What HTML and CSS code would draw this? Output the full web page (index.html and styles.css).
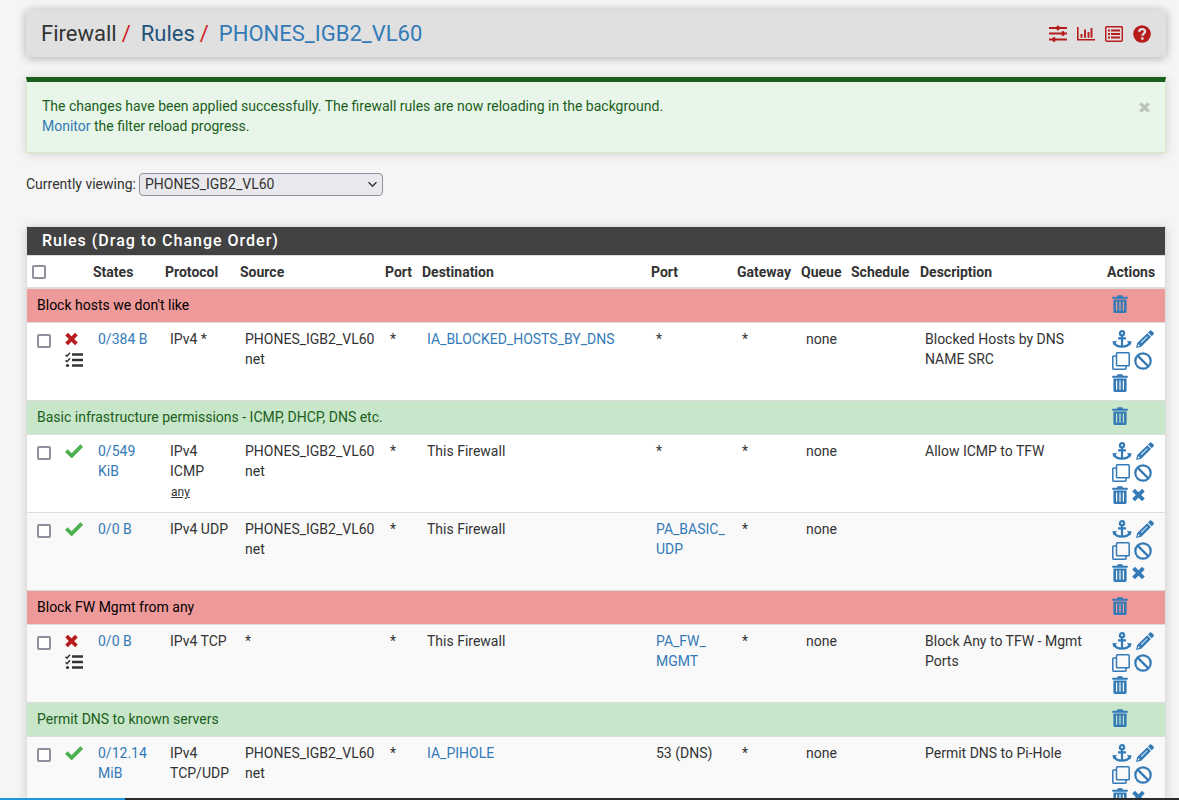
FILE: index.html
```html
<!DOCTYPE html>
<html lang="en">
<head>
<meta charset="utf-8">
<title>Firewall: Rules: PHONES_IGB2_VL60</title>
<link rel="stylesheet" href="styles.css">
</head>
<body>
<svg class="sprite" aria-hidden="true">
  <symbol id="sliders" viewBox="0 0 18 18"><path d="M0 3h18M0 8.500h18M0 14.500h18" stroke="currentColor" stroke-width="2"/><path d="M8 1h2v4H8zM13 6.500h2v4h-2zM4 12.500h2v4H4z" fill="currentColor" stroke="currentColor" stroke-width=".6"/></symbol>
  <symbol id="chart" viewBox="0 0 18 18"><path d="M.8 2v12.800H18" fill="none" stroke="currentColor" stroke-width="1.600"/><path d="M4.500 12.800V9M8 12.800V4.500M11.500 12.800V7M14.500 12.800V3" stroke="currentColor" stroke-width="1.900"/></symbol>
  <symbol id="list" viewBox="0 0 18 18"><rect x=".7" y="1.700" width="16.600" height="14.600" rx="1.300" fill="none" stroke="currentColor" stroke-width="1.500"/><path d="M3 5.500h2M3 9h2M3 12.500h2M6 5.500h9M6 9h9M6 12.500h9" stroke="currentColor" stroke-width="1.800"/></symbol>
  <symbol id="help" viewBox="0 0 18 18"><circle cx="9" cy="9" r="8.800" fill="currentColor"/><path d="M6 6.800C6.300 4.900 7.500 4.200 9 4.200c1.700 0 3 1 3 2.500 0 2-2.600 2-2.600 4.100" fill="none" stroke="#e0e0e0" stroke-width="2.300"/><path d="M8.100 12.300h2.500v2.400H8.100z" fill="#e0e0e0"/></symbol>
  <symbol id="trash" viewBox="0 0 16 18"><path fill="currentColor" fill-rule="evenodd" d="M5.200 1.800V1q0-.8.800-.8h4q.8 0 .8.800v.8H15q.8 0 .8.800v1.200H.2V2.600q0-.8.800-.8zM1.400 4.500h13.200v12q0 1.400-1.400 1.400H2.800q-1.400 0-1.400-1.400zM4 6.500v9.300h1.200V6.500zm3.400 0v9.300h1.200V6.500zm3.400 0v9.300H12V6.500z"/></symbol>
  <symbol id="anchor" viewBox="0 0 20 18"><g fill="none" stroke="currentColor" stroke-width="2.200"><circle cx="10" cy="3.200" r="2.100"/><path d="M10 5v11.500M6 8.400h8M2.500 13c1 2.500 4 3.700 7.500 3.700s6.500-1.200 7.500-3.700"/></g><path d="M.4 11.300 5.200 11 1.400 15.200zM19.600 11.300 14.800 11l3.800 4.200z" fill="currentColor"/></symbol>
  <symbol id="pencil" viewBox="0 0 18 18"><path fill="currentColor" fill-rule="evenodd" d="M13.700.7q1-.8 1.900 0l1.900 1.900q.8.900 0 1.900l-1.800 1.700-3.700-3.700zM11.300 3.200 15 6.900 5.200 16.800 0 18l1.200-5.100zm-.2 3-6.200 6.100.6.600 6.200-6.100zM2.200 14.200l-.6 2.200 2.200-.6z"/></symbol>
  <symbol id="copy" viewBox="0 0 18 18"><g fill="none" stroke="currentColor" stroke-width="1.500"><rect x="4.500" y=".8" width="12.700" height="12.900" rx=".8"/><path d="M4.300 4H1.500q-.7 0-.7.700v11.800q0 .7.700.7h11.800q.7 0 .7-.7V14"/></g></symbol>
  <symbol id="ban" viewBox="0 0 18 18"><g fill="none" stroke="currentColor" stroke-width="2.200"><circle cx="9" cy="9" r="7.700"/><path d="m3.600 3.600 10.800 10.800"/></g></symbol>
  <symbol id="cross" viewBox="0 0 14 14"><path d="m1.700 1.700 10.600 10.600M12.300 1.700 1.700 12.300" stroke="currentColor" stroke-width="4"/></symbol>
  <symbol id="check" viewBox="0 0 18 14"><path d="m1.300 6.600 5.400 5.200L16.700 1.600" fill="none" stroke="currentColor" stroke-width="3.700"/></symbol>
  <symbol id="tasks" viewBox="0 0 18 16"><path d="M7 2.500h11M7 8h11M7 13.500h11" stroke="currentColor" stroke-width="2.400"/><path d="m.5 2.800 1.500 1.400L5 .8M.5 8.300 2 9.700l3-3.400" fill="none" stroke="currentColor" stroke-width="1.500"/><circle cx="2.500" cy="13.500" r="1.600" fill="currentColor"/></symbol>
</svg>

<header class="page-header">
  <nav class="breadcrumb" aria-label="Breadcrumb">
    <span>Firewall</span><span class="slash">/</span><a class="dark-link" href="#">Rules</a><span class="slash">/</span><a href="#">PHONES_IGB2_VL60</a>
  </nav>
  <div class="tools">
    <a href="#" aria-label="Advanced filter"><svg class="icon"><use href="#sliders"/></svg></a>
    <a href="#" aria-label="Monitoring"><svg class="icon"><use href="#chart"/></svg></a>
    <a href="#" aria-label="Logs"><svg class="icon"><use href="#list"/></svg></a>
    <a href="#" aria-label="Help"><svg class="icon"><use href="#help"/></svg></a>
  </div>
</header>

<section class="alert">
  <p>The changes have been applied successfully. The firewall rules are now reloading in the background.<br><a href="#">Monitor</a> the filter reload progress.</p>
  <button class="close" type="button" aria-label="Close"><svg class="close-icon"><use href="#cross"/></svg></button>
</section>

<form class="viewing">
  <label for="iface">Currently viewing:</label>
  <span class="select-wrap"><select id="iface"><option>PHONES_IGB2_VL60</option></select><svg class="chevron" viewBox="0 0 8 6"><path d="m.5 1 3.500 3.500L7.500 1" fill="none" stroke="currentColor" stroke-width="1.300"/></svg></span>
</form>

<main class="panel">
  <h2>Rules (Drag to Change Order)</h2>
  <table>
    <colgroup><col class="c-check"><col class="c-icon"><col class="c-states"><col class="c-proto"><col class="c-source"><col class="c-sport"><col class="c-dest"><col class="c-dport"><col class="c-gateway"><col class="c-queue"><col class="c-schedule"><col class="c-desc"><col class="c-actions"></colgroup>
    <thead>
      <tr><th><input type="checkbox" aria-label="Select all"></th><th></th><th>States</th><th>Protocol</th><th>Source</th><th>Port</th><th>Destination</th><th>Port</th><th>Gateway</th><th>Queue</th><th>Schedule</th><th>Description</th><th>Actions</th></tr>
    </thead>
    <tbody>
      <tr class="sep red"><td colspan="12">Block hosts we don't like</td><td><a href="#" aria-label="Delete"><svg class="icon trash"><use href="#trash"/></svg></a></td></tr>
      <tr>
        <td><input type="checkbox" aria-label="Select rule"></td>
        <td><div class="status"><svg class="block"><use href="#cross"/></svg><svg class="log"><use href="#tasks"/></svg></div></td>
        <td><a href="#">0/384 B</a></td><td>IPv4 *</td><td>PHONES_IGB2_VL60 net</td><td>*</td><td><a href="#">IA_BLOCKED_HOSTS_BY_DNS</a></td><td>*</td><td>*</td><td>none</td><td></td><td>Blocked Hosts by DNS NAME SRC</td>
        <td><div class="actions"><a href="#" aria-label="Move"><svg class="icon anchor"><use href="#anchor"/></svg></a><a href="#" aria-label="Edit"><svg class="icon"><use href="#pencil"/></svg></a><a href="#" aria-label="Copy"><svg class="icon"><use href="#copy"/></svg></a><a href="#" aria-label="Disable"><svg class="icon"><use href="#ban"/></svg></a><a href="#" aria-label="Delete"><svg class="icon trash"><use href="#trash"/></svg></a></div></td>
      </tr>
      <tr class="sep green"><td colspan="12">Basic infrastructure permissions - ICMP, DHCP, DNS etc.</td><td><a href="#" aria-label="Delete"><svg class="icon trash"><use href="#trash"/></svg></a></td></tr>
      <tr>
        <td><input type="checkbox" aria-label="Select rule"></td>
        <td><div class="status"><svg class="pass"><use href="#check"/></svg></div></td>
        <td><a href="#">0/549 KiB</a></td><td>IPv4 ICMP<br><span class="any">any</span></td><td>PHONES_IGB2_VL60 net</td><td>*</td><td>This Firewall</td><td>*</td><td>*</td><td>none</td><td></td><td>Allow ICMP to TFW</td>
        <td><div class="actions"><a href="#" aria-label="Move"><svg class="icon anchor"><use href="#anchor"/></svg></a><a href="#" aria-label="Edit"><svg class="icon"><use href="#pencil"/></svg></a><a href="#" aria-label="Copy"><svg class="icon"><use href="#copy"/></svg></a><a href="#" aria-label="Disable"><svg class="icon"><use href="#ban"/></svg></a><a href="#" aria-label="Delete"><svg class="icon trash"><use href="#trash"/></svg></a><a href="#" aria-label="Clear states"><svg class="icon kill"><use href="#cross"/></svg></a></div></td>
      </tr>
      <tr>
        <td><input type="checkbox" aria-label="Select rule"></td>
        <td><div class="status"><svg class="pass"><use href="#check"/></svg></div></td>
        <td><a href="#">0/0 B</a></td><td>IPv4 UDP</td><td>PHONES_IGB2_VL60 net</td><td>*</td><td>This Firewall</td><td><a href="#">PA_BASIC_<wbr>UDP</a></td><td>*</td><td>none</td><td></td><td></td>
        <td><div class="actions"><a href="#" aria-label="Move"><svg class="icon anchor"><use href="#anchor"/></svg></a><a href="#" aria-label="Edit"><svg class="icon"><use href="#pencil"/></svg></a><a href="#" aria-label="Copy"><svg class="icon"><use href="#copy"/></svg></a><a href="#" aria-label="Disable"><svg class="icon"><use href="#ban"/></svg></a><a href="#" aria-label="Delete"><svg class="icon trash"><use href="#trash"/></svg></a><a href="#" aria-label="Clear states"><svg class="icon kill"><use href="#cross"/></svg></a></div></td>
      </tr>
      <tr class="sep red"><td colspan="12">Block FW Mgmt from any</td><td><a href="#" aria-label="Delete"><svg class="icon trash"><use href="#trash"/></svg></a></td></tr>
      <tr>
        <td><input type="checkbox" aria-label="Select rule"></td>
        <td><div class="status"><svg class="block"><use href="#cross"/></svg><svg class="log"><use href="#tasks"/></svg></div></td>
        <td><a href="#">0/0 B</a></td><td>IPv4 TCP</td><td>*</td><td>*</td><td>This Firewall</td><td><a href="#">PA_FW_<wbr>MGMT</a></td><td>*</td><td>none</td><td></td><td>Block Any to TFW - Mgmt Ports</td>
        <td><div class="actions"><a href="#" aria-label="Move"><svg class="icon anchor"><use href="#anchor"/></svg></a><a href="#" aria-label="Edit"><svg class="icon"><use href="#pencil"/></svg></a><a href="#" aria-label="Copy"><svg class="icon"><use href="#copy"/></svg></a><a href="#" aria-label="Disable"><svg class="icon"><use href="#ban"/></svg></a><a href="#" aria-label="Delete"><svg class="icon trash"><use href="#trash"/></svg></a></div></td>
      </tr>
      <tr class="sep green"><td colspan="12">Permit DNS to known servers</td><td><a href="#" aria-label="Delete"><svg class="icon trash"><use href="#trash"/></svg></a></td></tr>
      <tr>
        <td><input type="checkbox" aria-label="Select rule"></td>
        <td><div class="status"><svg class="pass"><use href="#check"/></svg></div></td>
        <td><a href="#">0/12.14 MiB</a></td><td>IPv4 TCP/UDP</td><td>PHONES_IGB2_VL60 net</td><td>*</td><td><a href="#">IA_PIHOLE</a></td><td>53 (DNS)</td><td>*</td><td>none</td><td></td><td>Permit DNS to Pi-Hole</td>
        <td><div class="actions"><a href="#" aria-label="Move"><svg class="icon anchor"><use href="#anchor"/></svg></a><a href="#" aria-label="Edit"><svg class="icon"><use href="#pencil"/></svg></a><a href="#" aria-label="Copy"><svg class="icon"><use href="#copy"/></svg></a><a href="#" aria-label="Disable"><svg class="icon"><use href="#ban"/></svg></a><a href="#" aria-label="Delete"><svg class="icon trash"><use href="#trash"/></svg></a><a href="#" aria-label="Clear states"><svg class="icon kill"><use href="#cross"/></svg></a></div></td>
      </tr>
    </tbody>
  </table>
</main>
<div class="progress"><div class="progress-fill"></div></div>
</body>
</html>
```
FILE: styles.css
```css
* { box-sizing: border-box; }
html { overflow: hidden; }
body {
  margin: 0;
  padding: 10px 13px 0 26px;
  background: #f5f5f5;
  color: #333;
  font: 14px/20px Roboto, sans-serif;
}
a { color: #337ab7; text-decoration: none; }
svg { display: block; }
.sprite { position: absolute; width: 0; height: 0; }
.icon { width: 18px; height: 18px; }

.page-header {
  display: flex;
  align-items: center;
  justify-content: space-between;
  min-height: 47px;
  padding: 0 15px;
  border-radius: 4px;
  background: #e0e0e0;
  box-shadow: 0 1px 10px rgba(0, 0, 0, .3);
}
.breadcrumb { font-size: 22px; line-height: 28px; }
.slash { margin: 0 10px 0 5px; color: #d01c1c; }
.dark-link { color: #23527c; }
.tools { display: flex; gap: 10px; }
.tools a { color: #b71c1c; }

.alert {
  display: flex;
  justify-content: space-between;
  margin-top: 20px;
  padding: 14px 15px 16px;
  min-height: 76px;
  border: 1px solid #d6e9c6;
  border-top: 5px solid #1b5e20;
  background: #e8f5e9;
  color: #1b5e20;
  box-shadow: 0 1px 10px rgba(0, 0, 0, .15);
}
.alert p { margin: 0; }
.close { align-self: flex-start; margin: 6px 0 0; padding: 0; border: 0; background: none; color: #bac4ba; }
.close-icon { width: 11px; height: 11px; }

.viewing { display: flex; align-items: flex-start; gap: 3px; margin-top: 20px; }
.select-wrap { display: grid; align-items: center; width: 244px; }
.select-wrap > * { grid-area: 1 / 1; }
.viewing label { padding-top: 1px; }
select {
  appearance: none;
  width: 100%;
  height: 23px;
  padding: 0 5px 1px;
  border: 1px solid #8f8f9d;
  border-radius: 4px;
  background: #e9e9ed;
  color: #333;
  font: inherit;
}
.chevron { justify-self: end; width: 9px; height: 7px; margin-right: 6px; pointer-events: none; }

.panel {
  margin-top: 30px;
  border: 1px solid #ddd;
  background: #fff;
  box-shadow: 0 1px 10px rgba(0, 0, 0, .15);
}
h2 {
  margin: 0;
  padding: 4px 15px;
  background: #424242;
  color: #fff;
  font-size: 16px;
  font-weight: 500;
  line-height: 20px;
  letter-spacing: 1px;
}
table { width: 100%; table-layout: fixed; border-collapse: separate; border-spacing: 0; }
.c-check { width: 28px; }
.c-icon { width: 33px; }
.c-states { width: 72px; }
.c-proto { width: 75px; }
.c-source { width: 145px; }
.c-sport { width: 37px; }
.c-dest { width: 229px; }
.c-dport { width: 86px; }
.c-gateway { width: 64px; }
.c-queue { width: 50px; }
.c-schedule { width: 69px; }
.c-desc { width: 187px; }
.c-actions { width: 63px; }
th {
  padding: 6px 5px 5px;
  border-top: 1px solid #ddd;
  border-bottom: 2px solid #ddd;
  font-weight: 700;
  text-align: left;
  white-space: nowrap;
}
td { height: 78px; padding: 6px 5px 7px 10px; border-bottom: 1px solid #ddd; vertical-align: top; }
tbody tr:nth-child(odd) { background: #f9f9f9; }
.sep td { height: 34px; }
tbody tr.red { background: #ef9a9a; color: #000; }
tbody tr.green { background: #c8e6c9; color: #1b5e20; }
input[type="checkbox"] {
  display: block;
  appearance: none;
  width: 14px;
  height: 14px;
  margin: 0;
  border: 2px solid #8f8f9d;
  border-radius: 2px;
  background: #fff;
}
td input[type="checkbox"] { margin-top: 5px; }
.status { display: grid; gap: 6px; padding-top: 3px; }
.block { width: 13px; height: 14px; color: #b71c1c; }
.pass { width: 18px; height: 14px; color: #4caf50; }
.log { width: 18px; height: 16px; }
.any { margin-left: 1px; font-size: 12px; text-decoration: underline; }
.actions { display: flex; flex-wrap: wrap; gap: 4px; padding-top: 1px; }
.anchor { width: 20px; }
.trash { width: 16px; }
.kill { width: 13px; }

.progress { position: fixed; right: 0; bottom: 0; left: 0; height: 2px; background: #2b2b2b; }
.progress-fill { width: 125px; height: 100%; background: #2196d9; }
```
